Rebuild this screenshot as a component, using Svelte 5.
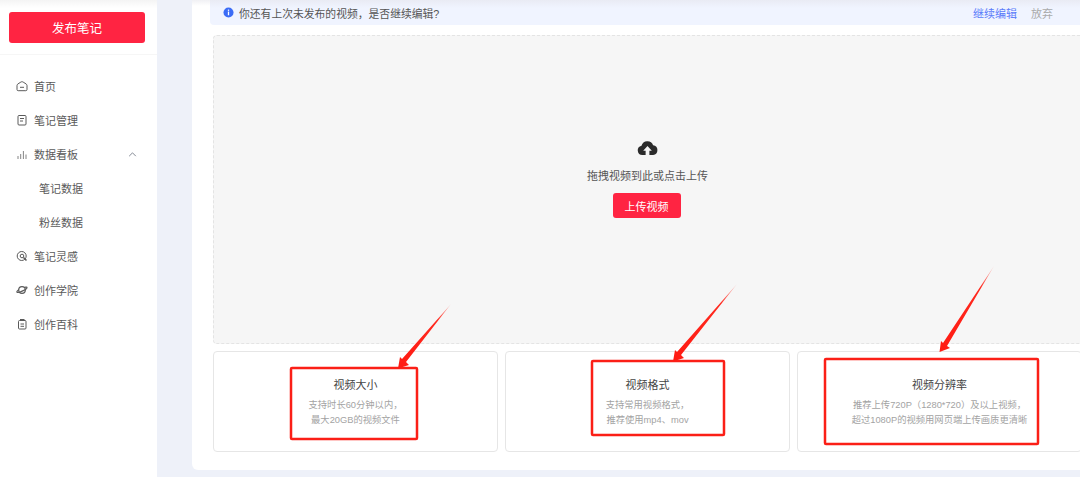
<script lang="ts">
const menu = [
	{ label: '首页', icon: 'home' },
	{ label: '笔记管理', icon: 'note' },
	{ label: '数据看板', icon: 'chart', open: true },
	{ label: '笔记数据', sub: true },
	{ label: '粉丝数据', sub: true },
	{ label: '笔记灵感', icon: 'idea' },
	{ label: '创作学院', icon: 'planet' },
	{ label: '创作百科', icon: 'book' }
];

const tips = [
	{ title: '视频大小', lines: ['支持时长60分钟以内，', '最大20GB的视频文件'] },
	{ title: '视频格式', lines: ['支持常用视频格式，', '推荐使用mp4、mov'] },
	{ title: '视频分辨率', lines: ['推荐上传720P（1280*720）及以上视频，', '超过1080P的视频用网页端上传画质更清晰'] }
];

// red annotations drawn over the screenshot
const boxes = [
	{ x: 291, y: 368, w: 126, h: 71 },
	{ x: 592, y: 361, w: 132, h: 74 },
	{ x: 825, y: 359, w: 213, h: 85 }
];
const arrows = [
	'M451 304 L406 362 L409 365 L398 368.500 L400 357 L402 359 Z',
	'M737 284 L681 355 L684 358 L673 361.500 L675 350 L677 352 Z',
	'M994 266 L947 346 L950 348 L939.500 352 L941 341 L943 343 Z'
];
</script>

<div class="page">
	<aside class="sidebar">
		<div class="publish-wrap">
			<button class="publish">发布笔记</button>
		</div>
		<nav class="menu">
			{#each menu as item}
				<div class="item" class:sub={item.sub}>
					{#if item.icon}
						<svg class="icon" viewBox="0 0 12 12" fill="none" stroke="#5a5a5a" stroke-width="1">
							{#if item.icon === 'home'}
								<path d="M1 5.500 C1 4.800 1.400 4.300 2 3.900L4.800 2.100C5.600 1.600 6.400 1.600 7.200 2.100L10 3.900C10.600 4.300 11 4.800 11 5.500V9.500A1.200 1.200 0 0 1 9.800 10.700H2.200A1.200 1.200 0 0 1 1 9.500Z" />
								<path d="M4 7.300h4" />
							{:else if item.icon === 'note'}
								<rect x="2" y="1.500" width="8" height="9.500" rx="1" />
								<path d="M4 4.500h4M4 7h3" />
							{:else if item.icon === 'chart'}
								<path d="M2 8v3M4.700 6v5M7.400 3v8M10 6.500v4.500" stroke="#777" stroke-width="0.900" />
							{:else if item.icon === 'idea'}
								<circle cx="5.700" cy="6" r="4.500" />
								<circle cx="6" cy="6" r="1.800" />
								<path d="M7.500 7.500l3 3" stroke-width="1.500" />
							{:else if item.icon === 'planet'}
								<circle cx="6" cy="6" r="3.300" stroke-width="1.200" />
								<path d="M3 5.500C1.400 6.800.6 7.800 1 8.200c.7.600 3.300-.1 5.700-1.300S11 4.200 11 3.700c0-.6-1-.7-2.300-.4" stroke-width="1.200" />
							{:else}
								<rect x="2.500" y="2.500" width="7.500" height="8.500" rx="1" />
								<path d="M4 1.500h4.500M4.500 6h3.500M4.500 8.300h3.500" />
							{/if}
						</svg>
					{/if}
					<span>{item.label}</span>
					{#if item.open}
						<svg class="chevron" viewBox="0 0 10 6" fill="none" stroke="#6b7280" stroke-width="1">
							<path d="M1 5l4-4 4 4" />
						</svg>
					{/if}
				</div>
			{/each}
		</nav>
	</aside>

	<main class="content">
		<div class="panel">
			<div class="notice">
				<svg class="info" viewBox="0 0 12 12">
					<circle cx="6" cy="6" r="5.500" fill="#3b6cf6" />
					<rect x="5.300" y="5" width="1.400" height="4" fill="#fff" />
					<rect x="5.300" y="2.800" width="1.400" height="1.400" fill="#fff" />
				</svg>
				<span class="notice-text">你还有上次未发布的视频，是否继续编辑?</span>
				<span class="resume">继续编辑</span>
				<span class="discard">放弃</span>
			</div>

			<div class="dropzone">
				<svg class="cloud" viewBox="0 0 22 16">
					<path fill="#2b2b2b" d="M5.500 16A5 5 0 0 1 4.600 6.100 6.500 6.500 0 0 1 17 5.500 5.300 5.300 0 0 1 17 16h-4v-4.500h2.600L11 6.500l-4.600 5H9V16z" />
				</svg>
				<p class="drop-text">拖拽视频到此或点击上传</p>
				<button class="upload">上传视频</button>
			</div>

			<div class="tips">
				{#each tips as tip}
					<div class="tip">
						<h3>{tip.title}</h3>
						{#each tip.lines as line}
							<p>{line}</p>
						{/each}
					</div>
				{/each}
			</div>
		</div>
	</main>

	<svg class="marks" viewBox="0 0 1080 477">
		<defs>
			<linearGradient id="tail" x1="1" y1="0" x2="0" y2="1">
				<stop offset="0" stop-color="#ff2a1f" stop-opacity="0.2" />
				<stop offset="0.25" stop-color="#ff2a1f" />
				<stop offset="1" stop-color="#ff1a12" />
			</linearGradient>
		</defs>
		{#each boxes as b}
			<rect x={b.x} y={b.y} width={b.w} height={b.h} rx="1" fill="none" stroke="#fb1f17" stroke-width="2.500" />
		{/each}
		{#each arrows as d}
			<path {d} fill="url(#tail)" />
		{/each}
	</svg>
</div>

<style>
:global(body) {
	margin: 0;
	background: #eef1f9;
}

.page {
	position: relative;
	display: flex;
	width: 1080px;
	height: 477px;
	overflow: hidden;
	background: #eef1f9;
	font-family: "Liberation Sans", "Noto Sans CJK SC", sans-serif;
}

.sidebar {
	flex: 0 0 157px;
	background: #fff;
}

.publish-wrap {
	padding: 12px 12px 11px 9px;
	border-bottom: 1px solid #f6f6f6;
	background: linear-gradient(#f4f4f4 0, #fff 8px);
}

.publish {
	display: block;
	width: 136px;
	height: 31px;
	padding: 0;
	border: none;
	border-radius: 3px;
	background: #ff2442;
	color: #fff;
	font: inherit;
	font-size: 12.500px;
}

.menu {
	padding-top: 14px;
}

.item {
	display: flex;
	align-items: center;
	height: 34px;
	padding-left: 16px;
	color: #5a5a5a;
	font-size: 11px;
}

.item.sub {
	padding-left: 39px;
}

.icon {
	flex: none;
	width: 12px;
	height: 12px;
	margin-right: 6px;
}

.chevron {
	width: 9px;
	height: 5px;
	margin-left: 50px;
}

.content {
	flex: 1;
	min-width: 0;
	padding-left: 35px;
}

.panel {
	box-sizing: border-box;
	width: 1000px;
	height: 470px;
	padding-left: 18px;
	border-radius: 0 0 0 6px;
	background: linear-gradient(#f0f0f4 0, #fff 6px);
}

.notice {
	display: flex;
	align-items: center;
	height: 25px;
	padding-left: 12px;
	width: 870px;
	border-radius: 0 0 4px 4px;
	background: linear-gradient(#e9ebf4 0, #f0f4ff 8px);
	font-size: 11px;
}

.info {
	width: 11px;
	height: 11px;
	margin-right: 5px;
	margin-left: 1px;
}

.notice-text {
	width: 734px;
	color: #555;
	font-size: 10.800px;
}

.resume {
	width: 58px;
	color: #5b7cfa;
}

.discard {
	color: #aaa;
}

.dropzone {
	box-sizing: border-box;
	display: flex;
	flex-direction: column;
	align-items: center;
	width: 920px;
	height: 309px;
	margin: 10px 0 7px 3px;
	padding-top: 104px;
	padding-right: 53px;
	border: 1px dashed #e4e4e4;
	border-radius: 4px;
	background: #f6f6f6;
}

.cloud {
	width: 21px;
	height: 15px;
	margin-left: 2px;
}

.drop-text {
	margin: 13px 0 9px 2px;
	color: #555;
	font-size: 11px;
	line-height: 16px;
}

.upload {
	width: 68px;
	height: 25px;
	padding: 0;
	border: none;
	border-radius: 3px;
	background: #ff2442;
	color: #fff;
	font: inherit;
	font-size: 11px;
}

.tips {
	display: flex;
	gap: 7px;
	margin-left: 3px;
}

.tip {
	box-sizing: border-box;
	flex: 0 0 285px;
	height: 101px;
	padding-top: 25px;
	border: 1px solid #e6e6e6;
	border-radius: 4px;
	text-align: center;
}

.tip h3 {
	margin: 0 0 5px;
	color: #444;
	font-size: 11px;
	font-weight: 400;
	line-height: 16px;
}

.tip p {
	margin: 0;
	color: #a3a3a3;
	font-size: 9.300px;
	line-height: 15px;
}

.marks {
	position: absolute;
	inset: 0;
	width: 1080px;
	height: 477px;
	pointer-events: none;
}
</style>
